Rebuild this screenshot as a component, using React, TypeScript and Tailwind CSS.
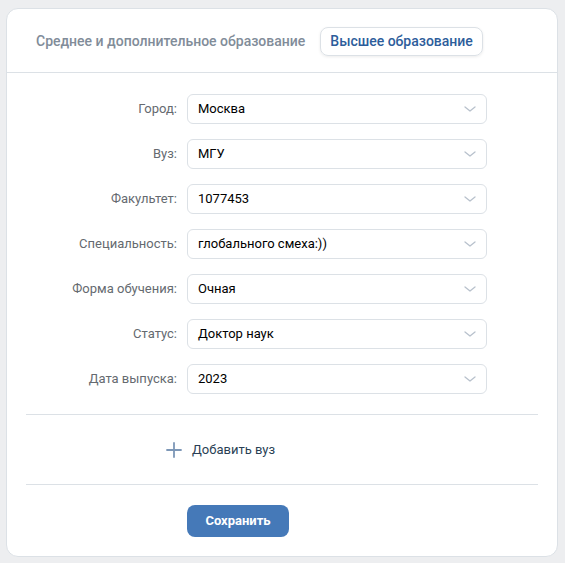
import React from "react";

const rows: [string, string][] = [
  ["Город:", "Москва"],
  ["Вуз:", "МГУ"],
  ["Факультет:", "1077453"],
  ["Специальность:", "глобального смеха:))"],
  ["Форма обучения:", "Очная"],
  ["Статус:", "Доктор наук"],
  ["Дата выпуска:", "2023"],
];

function Chevron() {
  return (
    <svg width="14" height="8" viewBox="0 0 14 8" fill="none">
      <path d="M2 2 L7 6 L12 2" stroke="#b8c1cc" strokeWidth="1.3" strokeLinecap="round" strokeLinejoin="round" />
    </svg>
  );
}

export default function App() {
  return (
    <div className="min-h-[563px] w-[565px] bg-[#edeef0] pt-[8px] pl-[6px]" style={{ fontFamily: "Roboto, 'Noto Sans', sans-serif" }}>
      <div className="w-[552px] h-[549px] bg-white rounded-[12px] border border-[#dce1e6] flex flex-col">
        <div className="h-[64px] border-b border-[#dce1e6] flex items-center pl-[29px] gap-[15px] pt-[1px]">
          <span className="text-[14px] font-medium text-[#818c99]">Среднее и дополнительное образование</span>
          <span className="h-[29px] px-[9px] flex items-center rounded-[8px] border border-[#dce1e6] shadow-[0_1px_3px_rgba(0,0,0,0.08)] text-[14px] font-medium text-[#2d5d9b]">
            Высшее образование
          </span>
        </div>
        <div className="flex flex-col gap-[15px] pt-[21px]">
          {rows.map(([label, value]) => (
            <div key={label} className="flex items-center">
              <div className="w-[180px] text-right text-[13px] text-[#656a70] pr-[10px]">{label}</div>
              <div className="w-[300px] h-[30px] border border-[#dce1e6] rounded-[6px] flex items-center justify-between pl-[10px] pr-[9px] text-[13px] text-black">
                <span>{value}</span>
                <Chevron />
              </div>
            </div>
          ))}
        </div>
        <div className="mx-[19px] mt-[20px] border-t border-[#dce1e6]" />
        <div className="h-[69px] flex items-center pl-[159px] gap-[10px]">
          <svg width="16" height="16" viewBox="0 0 16 16">
            <path d="M8 1v14M1 8h14" stroke="#7d97b7" strokeWidth="1.8" strokeLinecap="round" />
          </svg>
          <span className="text-[13px] text-[#2a3f55]">Добавить вуз</span>
        </div>
        <div className="mx-[19px] border-t border-[#dce1e6]" />
        <div className="pl-[180px] pt-[20px]">
          <button className="h-[32px] w-[102px] rounded-[8px] bg-[#4579b8] text-white text-[13px] font-bold">Сохранить</button>
        </div>
      </div>
    </div>
  );
}
